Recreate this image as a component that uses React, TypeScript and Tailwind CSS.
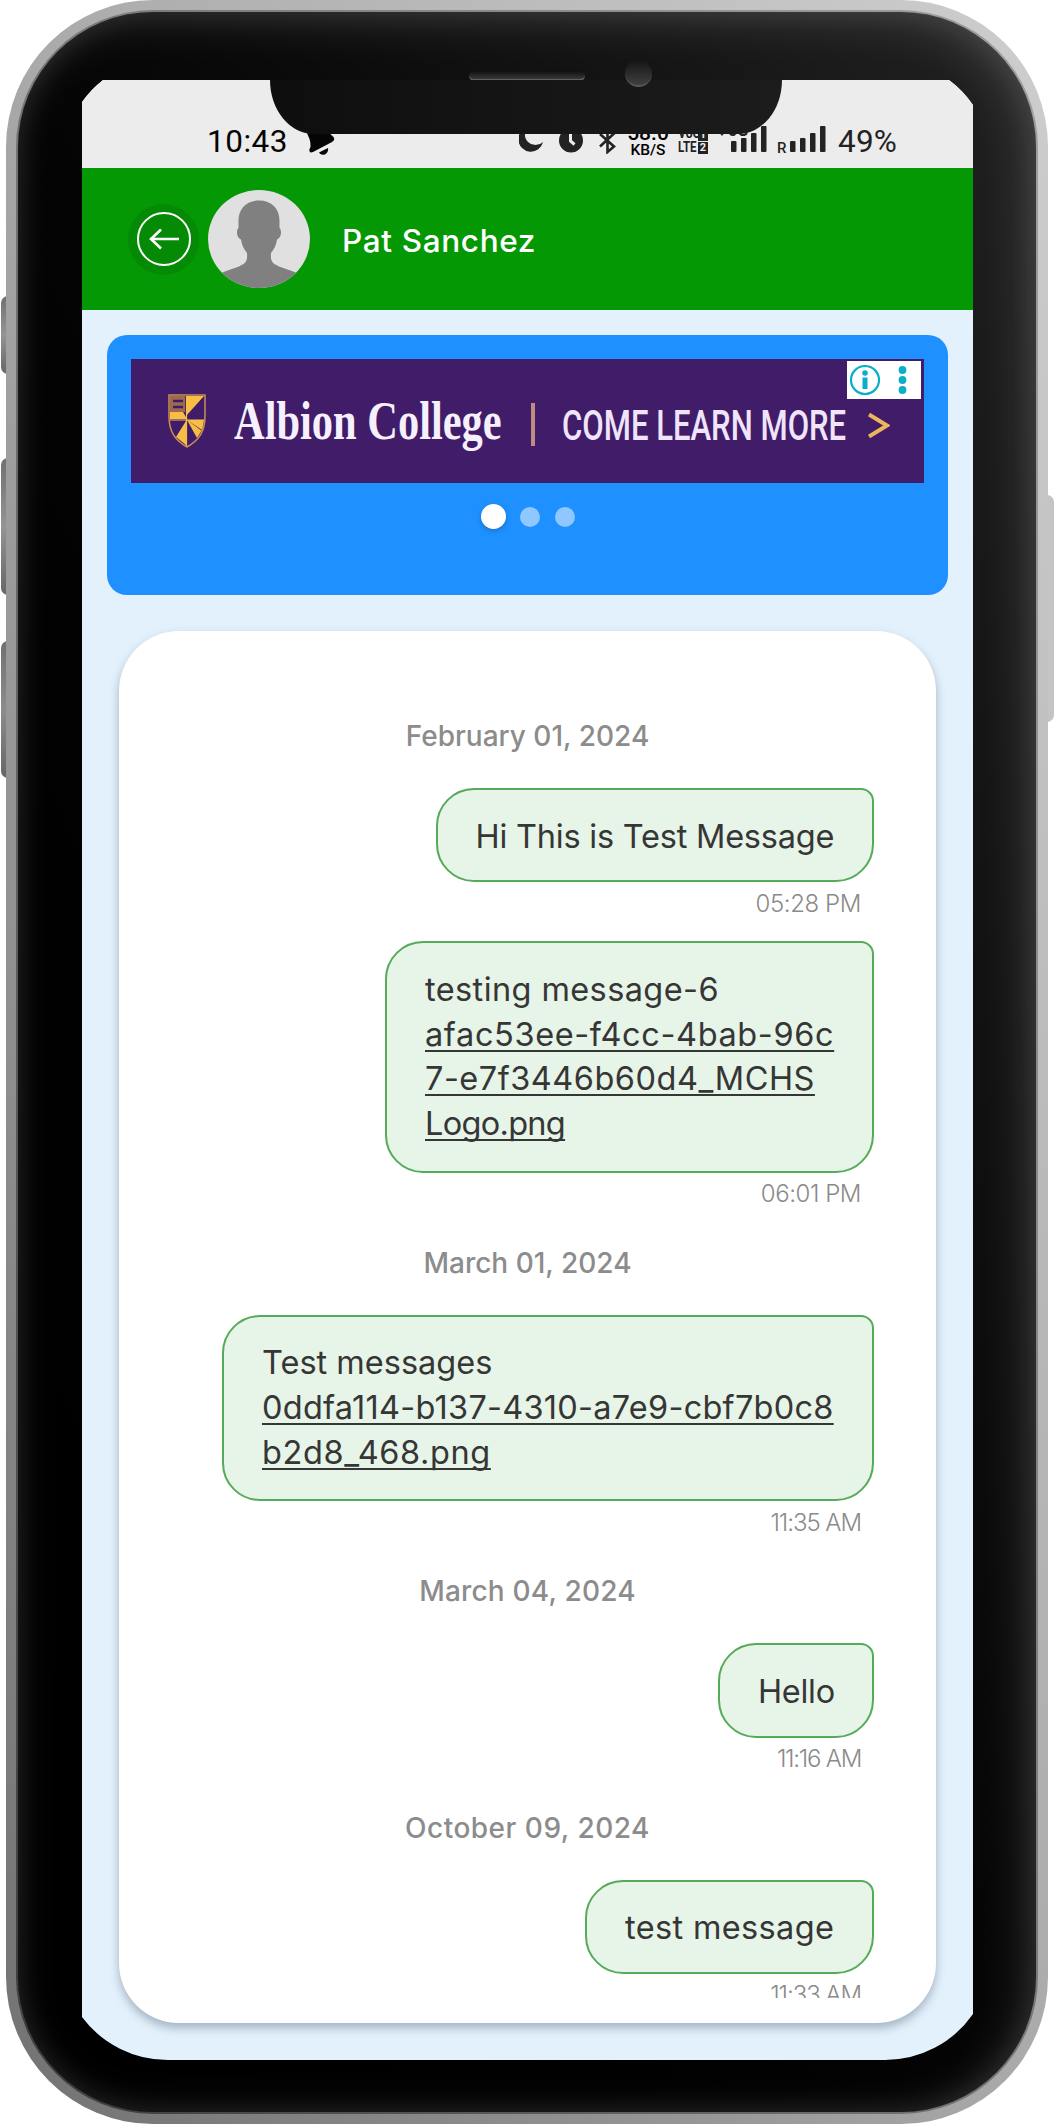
type Line = { text: string; tracking: string; link?: boolean }
type Message = { date?: string; dateTracking?: string; lines: Line[]; width: string; time: string; timeTracking: string }

const messages: Message[] = [
  {
    date: 'February 01, 2024',
    dateTracking: 'tracking-[0px]',
    lines: [{ text: 'Hi This is Test Message', tracking: 'tracking-[-0.22px]' }],
    width: 'w-[438.5px]',
    time: '05:28 PM',
    timeTracking: 'tracking-[-0.4px]',
  },
  {
    lines: [
      { text: 'testing message-6', tracking: 'tracking-[0.4px]' },
      { text: 'afac53ee-f4cc-4bab-96c', tracking: 'tracking-[0.62px]', link: true },
      { text: '7-e7f3446b60d4_MCHS', tracking: 'tracking-[0.5px]', link: true },
      { text: 'Logo.png', tracking: 'tracking-[-0.7px]', link: true },
    ],
    width: 'w-[489px]',
    time: '06:01 PM',
    timeTracking: 'tracking-[-0.45px]',
  },
  {
    date: 'March 01, 2024',
    dateTracking: 'tracking-[0px]',
    lines: [
      { text: 'Test messages', tracking: 'tracking-[0px]' },
      { text: '0ddfa114-b137-4310-a7e9-cbf7b0c8', tracking: 'tracking-[0.26px]', link: true },
      { text: 'b2d8_468.png', tracking: 'tracking-[0.6px]', link: true },
    ],
    width: 'w-[652px]',
    time: '11:35 AM',
    timeTracking: 'tracking-[-1.05px]',
  },
  {
    date: 'March 04, 2024',
    dateTracking: 'tracking-[0.2px]',
    lines: [{ text: 'Hello', tracking: 'tracking-[-0.3px]' }],
    width: 'w-[156px]',
    time: '11:16 AM',
    timeTracking: 'tracking-[-1.25px]',
  },
  {
    date: 'October 09, 2024',
    dateTracking: 'tracking-[0.5px]',
    lines: [{ text: 'test message', tracking: 'tracking-[0.35px]' }],
    width: 'w-[289px]',
    time: '11:33 AM',
    timeTracking: 'tracking-[-1.05px]',
  },
]

function Bell() {
  return (
    <svg viewBox="0 0 30 32" className="ml-[19px] mb-[13px] h-8 w-[30px] shrink-0" fill="#050505">
      <path d="M2 6 L20 1 C21.500 7 23 10 27.500 14 C29 16 28 18 26 19 L7 29 C4 30 3 29 3.500 26 L4.500 24 C5 17 2 13 1 10 Z" />
      <path d="M13 29.500 L22 25 C23 31 16 34 13 29.500Z" />
    </svg>
  )
}

function SignalBars() {
  return (
    <svg viewBox="0 0 36 26" className="h-[26px] w-9 shrink-0" fill="#232323">
      <rect x="0" y="15" width="5.500" height="11" rx="1" />
      <rect x="10" y="12" width="5.500" height="14" rx="1" />
      <rect x="20" y="7" width="5.500" height="19" rx="1" />
      <rect x="30" y="0" width="5.500" height="26" rx="1" />
    </svg>
  )
}

function StatusBar() {
  return (
    <div className="relative flex h-[88px] items-end bg-[#ececec] text-[#232323]">
      <span className="ml-[125px] mb-[8px] w-[80px] shrink-0 font-[Roboto,sans-serif] text-[31.5px] leading-9 tracking-[0.5px] text-[#050505]">10:43</span>
      <Bell />
      <svg viewBox="0 0 24 26" className="ml-[183px] mb-4 h-[26px] w-6 shrink-0" fill="#232323">
        <path d="M9 1 A12.500 12.500 0 1 0 24 16 A10 10 0 0 1 9 1Z" />
      </svg>
      <svg viewBox="0 0 24 25" className="ml-4 mb-[15px] h-[25px] w-6 shrink-0">
        <circle cx="12" cy="12.500" r="12" fill="#232323" />
        <path d="M11.500 5 V13 L15.500 16.500" stroke="#ececec" strokeWidth="3" fill="none" />
      </svg>
      <svg viewBox="0 0 17 28" className="ml-[16px] mb-[14px] h-7 w-[17px] shrink-0" fill="none" stroke="#232323" strokeWidth="2.600">
        <path d="M1 8 L15 20.500 L8.500 26 V2 L15 7.500 L1 20.500" />
      </svg>
      <div className="ml-[11px] mb-[9px] flex w-[42px] shrink-0 flex-col items-center font-[Roboto,sans-serif] font-medium">
        <span className="text-[21px] leading-[17px] text-black">58.0</span>
        <span className="text-[15.5px] leading-[17px] text-black">KB/S</span>
      </div>
      <div className="ml-[9px] mb-[14px] flex h-[28px] w-[31px] shrink-0 items-end">
        <div className="flex w-[20px] flex-col font-[Roboto,sans-serif] text-[15.5px] font-bold leading-[14px]">
          <span className="origin-left scale-x-[0.78]">VoO</span>
          <span className="origin-left scale-x-[0.74]">LTE</span>
        </div>
        <div className="flex flex-col gap-px font-[Roboto,sans-serif] text-[11px] font-bold leading-3 text-[#ececec]">
          <span className="w-[10px] bg-[#232323] text-center">1</span>
          <span className="w-[10px] bg-[#232323] text-center">2</span>
        </div>
      </div>
      <div className="relative ml-[22px] mb-4 flex shrink-0">
        <SignalBars />
        <span className="absolute -left-[3px] -top-[3px] font-[Roboto,sans-serif] text-[16px] font-bold leading-[16px]">5G</span>
        <svg viewBox="0 0 8 5" className="absolute -left-[13px] top-[5px] h-[5px] w-2" fill="#232323"><path d="M0 0H8L4 5Z" /></svg>
      </div>
      <span className="ml-[10px] mb-[12px] w-[13px] shrink-0 font-[Roboto,sans-serif] text-[15px] font-medium leading-[16px]">R</span>
      <div className="mb-4 flex"><SignalBars /></div>
      <span className="ml-[12px] mb-[8px] shrink-0 font-[Roboto,sans-serif] text-[31.5px] leading-9 tracking-[0.2px]">49%</span>
      <div className="absolute left-[188px] top-0 h-[54px] w-[512px] rounded-b-[44px_54px] bg-linear-to-r from-[#0e0e0e] to-[#1c1c1c]" />
    </div>
  )
}

function Header() {
  return (
    <header className="flex h-[142px] items-center bg-[#059805]">
      <button className="ml-[46px] flex size-[71px] shrink-0 items-center justify-center rounded-full bg-[#048a04]">
        <svg viewBox="0 0 54 54" className="size-[54px]" fill="none" stroke="white">
          <circle cx="27" cy="27" r="26" strokeWidth="2" />
          <path d="M42 27 H14 M24 17.500 L14 27 L24 36.500" strokeWidth="2.600" />
        </svg>
      </button>
      <svg viewBox="0 0 102 98" className="ml-[9px] h-[98px] w-[102px] shrink-0">
        <clipPath id="avatar"><ellipse cx="51" cy="49" rx="51" ry="49" /></clipPath>
        <g clipPath="url(#avatar)">
          <rect width="102" height="98" fill="#e0e0e0" />
          <path d="M51 10.500 C38 10.500 30 19 30.500 32 L30.500 38 C28 40 28.500 48 33 49.500 C34 56 36 59 39 63 C40 73 36 74 31 76.500 C22 80 15 81.500 9 85 V98 H93 V85 C87 81.500 80 80 71 76.500 C66 74 62 73 63 63 C66 59 68 56 69 49.500 C73.500 48 74 40 71.500 38 L71.500 32 C72 19 64 10.500 51 10.500Z" fill="#808080" />
        </g>
      </svg>
      <h1 className="ml-[32px] whitespace-nowrap pt-[3px] text-[31.5px] font-medium leading-10 tracking-[0.65px] text-white">Pat Sanchez</h1>
    </header>
  )
}

function Shield() {
  return (
    <svg viewBox="0 0 38 54" className="ml-[36.500px] h-[54px] w-[38px] shrink-0">
      <path d="M1 1 H37 V22 C37 38 31 46 19 53 C7 46 1 38 1 22 Z" fill="#3f1c69" stroke="#c98f55" strokeWidth="1.500" />
      <path d="M2 2H17V18H2Z" fill="#9c6b4c" />
      <path d="M5 7H15M5 13H15" stroke="#3f1c69" strokeWidth="2.500" />
      <path d="M2 18 H15 L19 25 H2Z M18 2 H36 L18 22Z M19 26 H36 L34 37Z M18 27 L8 43 L18 51Z M19 26 L29 44 L34 36Z" fill="#f7bd45" />
      <path d="M18.500 2 V52 M2 26 H36" stroke="#f7bd45" strokeWidth="1.200" />
    </svg>
  )
}

function Banner() {
  return (
    <section className="mx-[25px] mt-[25px] h-[259.5px] rounded-[20px] bg-[#1e90ff] pt-6">
      <div className="relative mx-auto flex h-[124px] w-[793px] items-center bg-[#401c69]">
        <Shield />
        <div className="ml-[28.5px] w-[270px] shrink-0">
          <span className="block w-max origin-left scale-x-[0.786] whitespace-nowrap font-['Liberation_Serif',serif] text-[54px] font-bold leading-[60px] text-[#f6effc]">Albion College</span>
        </div>
        <div className="ml-[26.5px] mt-[6px] h-[43px] w-1 shrink-0 bg-[#be8c80]" />
        <div className="ml-[27px] mt-[9px] w-[288px] shrink-0">
          <span className="block w-max origin-left scale-x-[0.74] whitespace-nowrap font-[Roboto,sans-serif] text-[42px] font-medium leading-[50px] text-[#efe4fa]">COME LEARN MORE</span>
        </div>
        <svg viewBox="0 0 22 27" className="ml-[18px] mt-[9px] h-[27px] w-[22px] shrink-0" fill="none" stroke="#ecb75c" strokeWidth="4">
          <path d="M1 2.500 L19 13.500 L1 24.500" />
        </svg>
        <div className="absolute right-[3px] top-[2px] flex h-[38px] w-[74px] items-center bg-white">
          <svg viewBox="1 0 74 38" className="h-[38px] w-[74px]" fill="#0aaecb">
            <circle cx="19" cy="19" r="14" fill="none" stroke="#0aaecb" strokeWidth="2.200" />
            <circle cx="19" cy="12" r="2.800" />
            <rect x="16.500" y="16.500" width="5" height="11.500" />
            <circle cx="56.500" cy="9" r="3.900" />
            <circle cx="56.500" cy="19" r="3.900" />
            <circle cx="56.500" cy="29" r="3.900" />
          </svg>
        </div>
      </div>
      <div className="mt-[21px] flex items-center justify-center gap-[14.500px]">
        <span className="size-[25px] rounded-full bg-white shadow-[0_2px_5px_rgba(0,0,0,0.2)]" />
        <span className="size-5 rounded-full bg-white/50" />
        <span className="size-5 rounded-full bg-white/50" />
      </div>
    </section>
  )
}

function ChatMessage({ message }: { message: Message }) {
  const hasLink = message.lines.some((line) => line.link)
  return (
    <>
      {message.date && (
        <div className="flex h-[83px] shrink-0 justify-center pl-[22px] pt-[11px] text-[28px] font-medium leading-10 text-[#8c8c8c]">
          <span className={message.dateTracking}>{message.date}</span>
        </div>
      )}
      <div
        className={`${message.width} ${hasLink ? 'pb-[24px]' : 'pb-[21px]'} shrink-0 self-end rounded-[38px] rounded-tr-[13px] border-2 border-[#56ab5a] bg-[#e7f4e8] pl-[38px] pt-[24.800px] text-[32.5px] leading-[44.600px] text-[#363636]`}
      >
        {message.lines.map((line) => (
          <div key={line.text} className="h-[44.6px] whitespace-nowrap">
            <span
              className={`${line.tracking} ${line.link ? 'underline decoration-[1.500px] underline-offset-[4px] [text-decoration-skip-ink:none]' : ''}`}
            >
              {line.text}
            </span>
          </div>
        ))}
      </div>
      <div className="flex h-[59px] shrink-0 justify-end pr-[13px] pt-[7.5px] text-[24px] font-[350] leading-7 text-[#8a8a8a]">
        <span className={message.timeTracking}>{message.time}</span>
      </div>
    </>
  )
}

export default function App() {
  return (
    <main className="relative h-[2124px] w-[1054px] overflow-hidden bg-white font-[Inter,sans-serif]">
      <div className="absolute left-px top-[296px] h-[78px] w-4 rounded-l-[7px] bg-linear-to-b from-[#707070] via-[#949494] to-[#666]" />
      <div className="absolute left-px top-[458px] h-[137px] w-4 rounded-l-[7px] bg-linear-to-b from-[#707070] via-[#949494] to-[#666]" />
      <div className="absolute left-px top-[641px] h-[137px] w-4 rounded-l-[7px] bg-linear-to-b from-[#707070] via-[#8c8c8c] to-[#666]" />
      <div className="absolute right-0 top-[495px] h-[227px] w-4 rounded-r-[7px] bg-[#c4c4c4]" />
      <div className="relative ml-[6px] h-[2124px] w-[1042px] rounded-[147px] bg-linear-to-tr from-[#727272] via-[#aaa] to-[#cecece] p-[10px]">
        <div className="h-full rounded-[137px] bg-linear-to-tr from-[#3c3c3c] via-[#777] to-[#a0a0a0] p-[2px]">
          <div className="relative h-full rounded-[135px] bg-linear-to-tr from-black via-[#050505] to-[#222] pl-[64px] pt-[68px] shadow-[inset_-12px_8px_50px_rgba(255,255,255,0.13),inset_0_0_30px_rgba(255,255,255,0.1)]">
            <div className="absolute left-[451px] top-[58px] h-[11px] w-[116px] rounded-full border-b-2 border-[#606060] bg-linear-to-b from-[#0c0c0c] to-[#383838]" />
            <div className="absolute left-[607px] top-[48px] z-10 size-[27px] rounded-full border-b-2 border-[#585858] bg-linear-to-b from-[#151515] to-[#404040]" />
            <div className="flex h-[1980px] w-[891px] flex-col bg-[#e3f1fc] [clip-path:path('M21_0_H867A107_107_0_0_1_891_25_V1934_A107_107_0_0_1_803_1980_H86_A107_107_0_0_1_0_1937_V22_A107_107_0_0_1_21_0_Z')]">
              <StatusBar />
              <Header />
              <Banner />
              <section className="mx-[37px] mt-[36.5px] h-[1392px] rounded-[60px] bg-white pt-[74px] pl-[40px] pr-[62px] shadow-[0_5px_10px_rgba(60,80,100,0.38)]">
                <div className="flex h-[1293px] flex-col overflow-hidden">
                  {messages.map((message) => (
                    <ChatMessage key={message.time} message={message} />
                  ))}
                </div>
              </section>
            </div>
          </div>
        </div>
      </div>
    </main>
  )
}
